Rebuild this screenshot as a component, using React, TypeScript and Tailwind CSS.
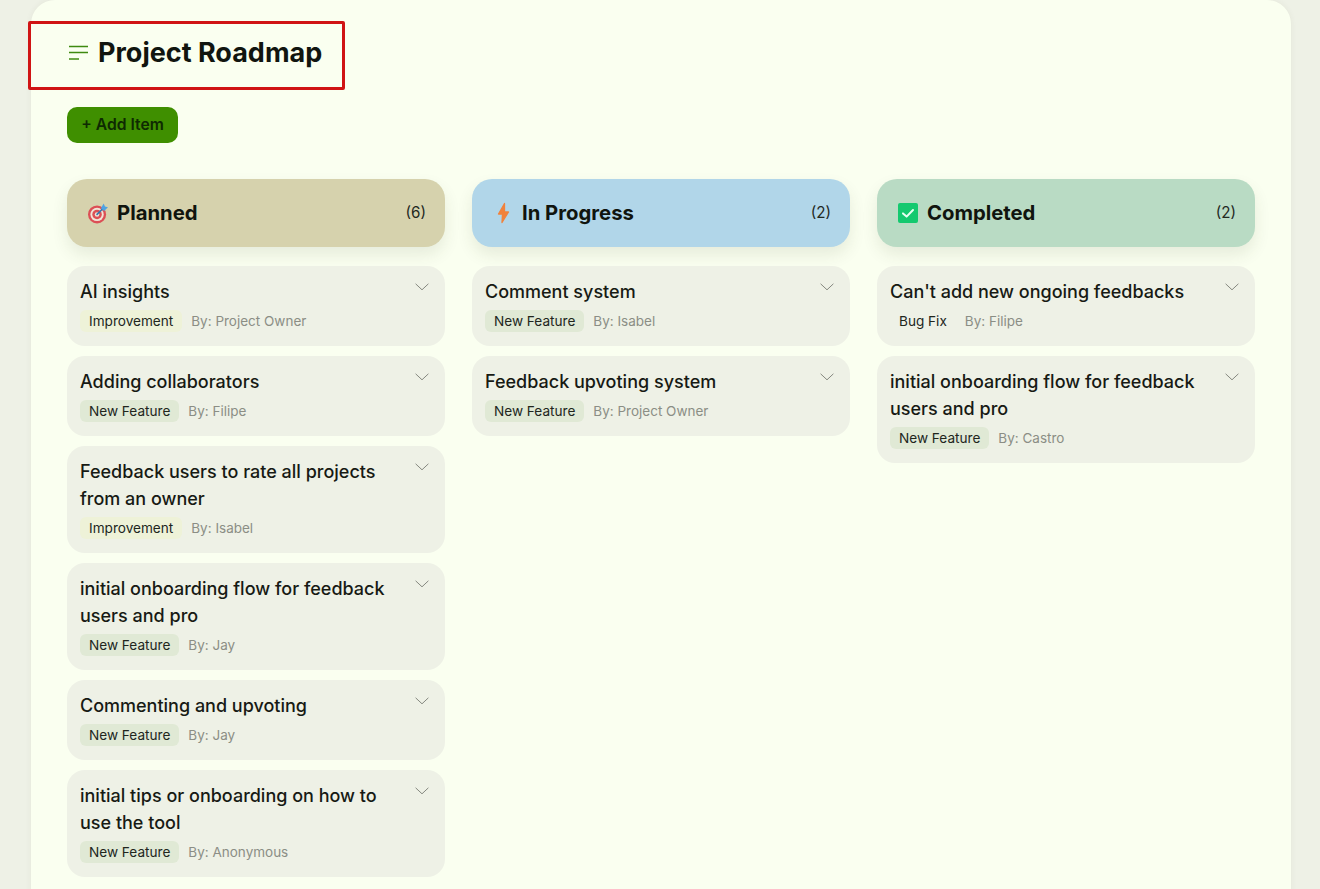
import React from "react";

type Item = { title: string; tag: "Improvement" | "New Feature" | "Bug Fix"; by: string };

const planned: Item[] = [
  { title: "AI insights", tag: "Improvement", by: "Project Owner" },
  { title: "Adding collaborators", tag: "New Feature", by: "Filipe" },
  { title: "Feedback users to rate all projects from an owner", tag: "Improvement", by: "Isabel" },
  { title: "initial onboarding flow for feedback users and pro", tag: "New Feature", by: "Jay" },
  { title: "Commenting and upvoting", tag: "New Feature", by: "Jay" },
  { title: "initial tips or onboarding on how to use the tool", tag: "New Feature", by: "Anonymous" },
];

const inProgress: Item[] = [
  { title: "Comment system", tag: "New Feature", by: "Isabel" },
  { title: "Feedback upvoting system", tag: "New Feature", by: "Project Owner" },
];

const completed: Item[] = [
  { title: "Can't add new ongoing feedbacks", tag: "Bug Fix", by: "Filipe" },
  { title: "initial onboarding flow for feedback users and pro", tag: "New Feature", by: "Castro" },
];

const tagStyles = {
  Improvement: "bg-[#eef2d8]",
  "New Feature": "bg-[#e0e9d5]",
  "Bug Fix": "bg-[#eef1e6]",
};

const TargetIcon = () => (
  <svg width="21" height="21" viewBox="0 0 21 21" fill="none">
    <circle cx="9.5" cy="11.5" r="9.5" fill="#dc4f55" />
    <circle cx="9.5" cy="11.5" r="7" fill="#f1e4d6" />
    <circle cx="9.5" cy="11.5" r="5" fill="#dc4f55" />
    <circle cx="9.5" cy="11.5" r="2.4" fill="#f1e4d6" />
    <path d="M9.5 11.5 L16 5" stroke="#3a78ad" strokeWidth="1.8" strokeLinecap="round" />
    <path d="M13.5 5 L16.5 0 L17.8 3.2 L21 4 L17 8 Z" fill="#4fa3e3" />
  </svg>
);

const BoltIcon = () => (
  <svg width="15" height="22" viewBox="0 0 15 22">
    <path d="M8.5 1.5 L2.5 12 L6.5 12 L6 20.5 L12.5 10 L8.5 10 Z" fill="#f0823c" stroke="#f0823c" strokeWidth="1.3" strokeLinejoin="round" />
  </svg>
);

const CheckIcon = () => (
  <svg width="20" height="20" viewBox="0 0 20 20" fill="none">
    <rect width="20" height="20" rx="2" fill="#14c96f" />
    <path d="M5 10.4 L8.6 13.6 L15 7" stroke="#e8fff2" strokeWidth="2" strokeLinecap="round" strokeLinejoin="round" />
  </svg>
);

const Card = ({ item }: { item: Item }) => (
  <div className="relative rounded-[18px] bg-[#eef1e6] pl-[13px] pr-[42px] pt-[12px] pb-[14px]">
    <div className="text-[18px] leading-[27px] font-medium text-[#171a14]">{item.title}</div>
    <div className="mt-[5px] flex items-center">
      <span className={`rounded-md px-[9px] py-[2px] text-[13.6px] leading-[18px] font-normal text-[#21261d] ${tagStyles[item.tag]}`}>
        {item.tag}
      </span>
      <span className="ml-[9px] text-[13.5px] leading-[18px] text-[#8b8e85]">By: {item.by}</span>
    </div>
    <svg className="absolute right-[16px] top-[17px]" width="14" height="8" viewBox="0 0 14 8" fill="none">
      <path d="M0.6 0.8 L7 6.8 L13.4 0.8" stroke="#85887f" strokeWidth="1" />
    </svg>
  </div>
);

const Column = ({
  title,
  count,
  icon,
  bg,
  items,
}: {
  title: string;
  count: number;
  icon: React.ReactNode;
  bg: string;
  items: Item[];
}) => (
  <div className="flex flex-col">
    <div className={`flex h-[68px] items-center justify-between rounded-[20px] pl-[21px] pr-[19px] shadow-[0_8px_16px_rgba(60,70,40,0.1)] ${bg}`}>
      <div className="flex items-center gap-[9px]">
        <span className="flex w-[20px] justify-center">{icon}</span>
        <span className="text-[20.3px] font-bold leading-[28px] text-[#10140e]">{title}</span>
      </div>
      <span className="text-[15.2px] text-[#23291f]">({count})</span>
    </div>
    <div className="mt-[19px] flex flex-col gap-[10px]">
      {items.map((item) => (
        <Card key={item.title} item={item} />
      ))}
    </div>
  </div>
);

export default function App() {
  return (
    <div
      className="relative h-[889px] overflow-hidden bg-[#eef1e6] px-[29px]"
      style={{ fontFamily: "Inter, 'Liberation Sans', sans-serif" }}
    >
      <main className="ml-[2px] h-[920px] w-[1260px] rounded-[24px] bg-[#fafff0] px-[36px] pt-[33px] shadow-[0_0_6px_rgba(60,70,40,0.06)]">
        <div className="flex h-[40px] items-center gap-[10px]">
          <svg width="20" height="16" viewBox="0 0 20 16" fill="none" className="ml-[1px]">
            <path d="M1 1.5 H20 M1 7.5 H20 M1 14 H11" stroke="#3f8a10" strokeWidth="1.5" />
          </svg>
          <h1 className="text-[27px] font-bold leading-[40px] text-[#11150f]">Project Roadmap</h1>
        </div>

        <button className="mt-[34px] h-[36px] w-[111px] rounded-[10px] bg-[#3f8f00] text-[15.7px] font-semibold text-[#0e2a02]">
          + Add Item
        </button>

        <div className="mt-[36px] grid grid-cols-3 gap-[27px]">
          <Column title="Planned" count={6} icon={<TargetIcon />} bg="bg-[#d6d2ad]" items={planned} />
          <Column title="In Progress" count={2} icon={<BoltIcon />} bg="bg-[#b1d6e9]" items={inProgress} />
          <Column title="Completed" count={2} icon={<CheckIcon />} bg="bg-[#b9dbc4]" items={completed} />
        </div>
      </main>

      {/* red annotation box */}
      <div className="absolute left-[28px] top-[21px] h-[69px] w-[317px] rounded-[2px] border-[3px] border-[#d01414]" />
    </div>
  );
}
